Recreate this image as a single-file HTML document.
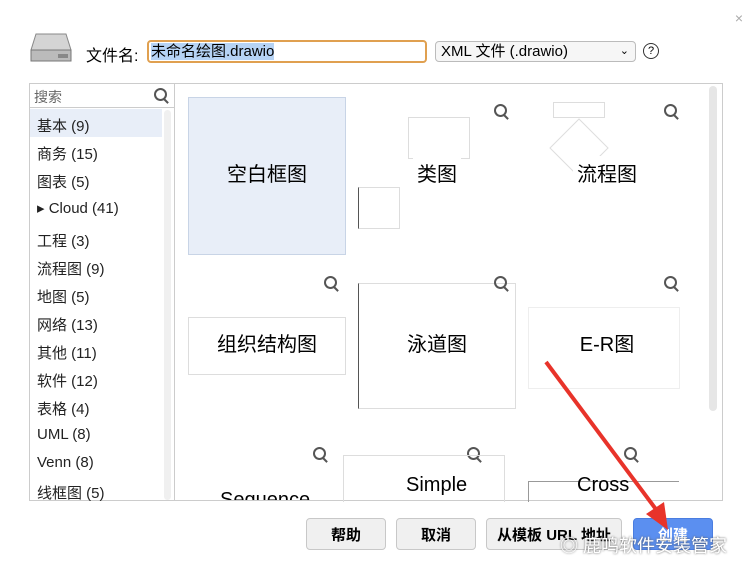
<html><head><style>
body{margin:0;width:755px;height:576px;background:#fff;font-family:"Liberation Sans","Noto Sans CJK SC",sans-serif;position:relative;overflow:hidden}
.a{position:absolute}
.tile{position:absolute;width:158px;height:158px;font-size:20px;color:#000;display:flex;align-items:center;justify-content:center;padding-bottom:8px;box-sizing:border-box}
.tile span{background:#fff;padding:2px 4px;position:relative}
.li{position:absolute;left:37px;font-size:15px;color:#222}
.btn{position:absolute;top:518px;height:32px;border:1px solid #c8c8c8;border-radius:4px;background:#f0f0f0;font-size:15px;font-weight:bold;display:flex;align-items:center;justify-content:center;box-sizing:border-box}
.mag{position:absolute;width:9px;height:9px;border:2px solid #555;border-radius:50%}
.mag:after{content:"";position:absolute;width:2px;height:6px;background:#555;left:9px;top:8px;transform:rotate(-45deg)}
.ln{position:absolute;border:1px solid #ddd}
</style></head><body>
<div class="a" style="right:12px;top:10px;color:#aaa;font-size:14px">×</div>
<svg class="a" style="left:30px;top:32px" width="42" height="32"><path d="M6 2h30l5 16v11H1V18z" fill="#d4d4d4" stroke="#888"/><rect x="1" y="18" width="40" height="11" fill="#bbb" stroke="#777"/><rect x="28" y="22" width="10" height="4" fill="#888"/></svg>
<div class="a" style="left:86px;top:42px;font-size:16px">文件名:</div>
<div class="a" style="left:147px;top:40px;width:280px;height:23px;border:2px solid #e0a050;border-radius:4px;box-sizing:border-box;font-size:15px;line-height:20px;padding-left:2px"><span style="background:#b6d3f5">未命名绘图.drawio</span></div>
<div class="a" style="left:435px;top:41px;width:201px;height:21px;border:1px solid #bbb;border-radius:4px;box-sizing:border-box;font-size:15px;line-height:19px;padding-left:5px;background:#f6f6f6">XML 文件 (.drawio)<span style="position:absolute;right:6px;font-size:11px">⌄</span></div>
<div class="a" style="left:643px;top:43px;width:14px;height:14px;border:1.5px solid #333;border-radius:50%;font-size:11px;text-align:center;line-height:14px">?</div>
<div class="a" style="left:29px;top:83px;width:694px;height:418px;border:1px solid #ccc;box-sizing:border-box"></div>
<div class="a" style="left:174px;top:83px;width:1px;height:418px;background:#ccc"></div>
<div class="a" style="left:29px;top:107px;width:145px;height:1px;background:#ccc"></div>
<div class="a" style="left:34px;top:87px;font-size:14px;color:#666">搜索</div>
<div class="mag" style="left:154px;top:88px"></div>
<div class="a" style="left:30px;top:109px;width:132px;height:28px;background:#e8eef8"></div>
<div class="a" style="left:164px;top:110px;width:7px;height:390px;background:#f0f0f0;border-radius:4px"></div>
<div class="li" style="top:115px">基本 (9)</div>
<div class="li" style="top:143px">商务 (15)</div>
<div class="li" style="top:171px">图表 (5)</div>
<div class="li" style="top:199px">▸ Cloud (41)</div>
<div class="li" style="top:230px">工程 (3)</div>
<div class="li" style="top:258px">流程图 (9)</div>
<div class="li" style="top:286px">地图 (5)</div>
<div class="li" style="top:314px">网络 (13)</div>
<div class="li" style="top:342px">其他 (11)</div>
<div class="li" style="top:370px">软件 (12)</div>
<div class="li" style="top:398px">表格 (4)</div>
<div class="li" style="top:426px">UML (8)</div>
<div class="li" style="top:454px">Venn (8)</div>
<div class="li" style="top:482px">线框图 (5)</div>
<div class="a" style="left:709px;top:86px;width:8px;height:325px;background:#e6e6e6;border-radius:4px"></div>
<div class="tile" style="left:188px;top:97px;background:#e8eef8;border:1px solid #c8d4e6">空白框图</div>
<div class="tile" style="left:358px;top:97px"><div class="ln" style="left:0;top:90px;width:40px;height:40px;border-left-color:#555"></div><div class="ln" style="left:50px;top:20px;width:60px;height:40px"></div><span>类图</span></div>
<div class="tile" style="left:528px;top:97px"><div class="ln" style="left:25px;top:5px;width:50px;height:14px"></div><div class="ln" style="left:30px;top:30px;width:40px;height:40px;transform:rotate(45deg)"></div><span>流程图</span></div>
<div class="tile" style="left:188px;top:267px"><div class="ln" style="left:0;top:50px;width:156px;height:56px"></div><span>组织结构图</span></div>
<div class="tile" style="left:358px;top:267px"><div class="ln" style="left:0;top:16px;width:156px;height:124px;border-left-color:#555"></div><span>泳道图</span></div>
<div class="tile" style="left:528px;top:267px"><div class="ln" style="left:0;top:40px;width:150px;height:80px;border-color:#eee"></div><span>E-R图</span></div>
<div class="mag" style="left:494px;top:104px"></div><div class="mag" style="left:664px;top:104px"></div>
<div class="mag" style="left:324px;top:276px"></div><div class="mag" style="left:494px;top:276px"></div><div class="mag" style="left:664px;top:276px"></div>
<div class="mag" style="left:313px;top:447px"></div><div class="mag" style="left:467px;top:447px"></div><div class="mag" style="left:624px;top:447px"></div>
<div class="a" style="left:220px;top:489px;font-size:20px;height:11px;overflow:hidden;line-height:22px">Sequence</div>
<div class="a" style="left:343px;top:455px;width:160px;height:46px;border:1px solid #ddd;border-bottom:none"></div>
<div class="a" style="left:406px;top:474px;font-size:20px">Simple</div>
<div class="a" style="left:528px;top:481px;width:150px;height:20px;border:1px solid #999;border-bottom:none;border-right:none"></div>
<div class="a" style="left:577px;top:474px;font-size:20px">Cross</div>
<div class="btn" style="left:306px;width:80px">帮助</div>
<div class="btn" style="left:396px;width:80px">取消</div>
<div class="btn" style="left:486px;width:136px">从模板 URL 地址</div>
<div class="btn" style="left:633px;width:80px;background:#5b8ff0;border-color:#4a7de0;color:#fff">创建</div>
<svg class="a" style="left:0;top:0" width="755" height="576"><line x1="546" y1="362" x2="658" y2="512" stroke="#e8332a" stroke-width="4"/><polygon points="668,530 646,514 664,502" fill="#e8332a"/></svg>
<div class="a" style="left:560px;top:532px;font-size:18px;color:#fff;text-shadow:0 0 2px #555">◎ 鹿鸣软件安装管家</div>
</body></html>
